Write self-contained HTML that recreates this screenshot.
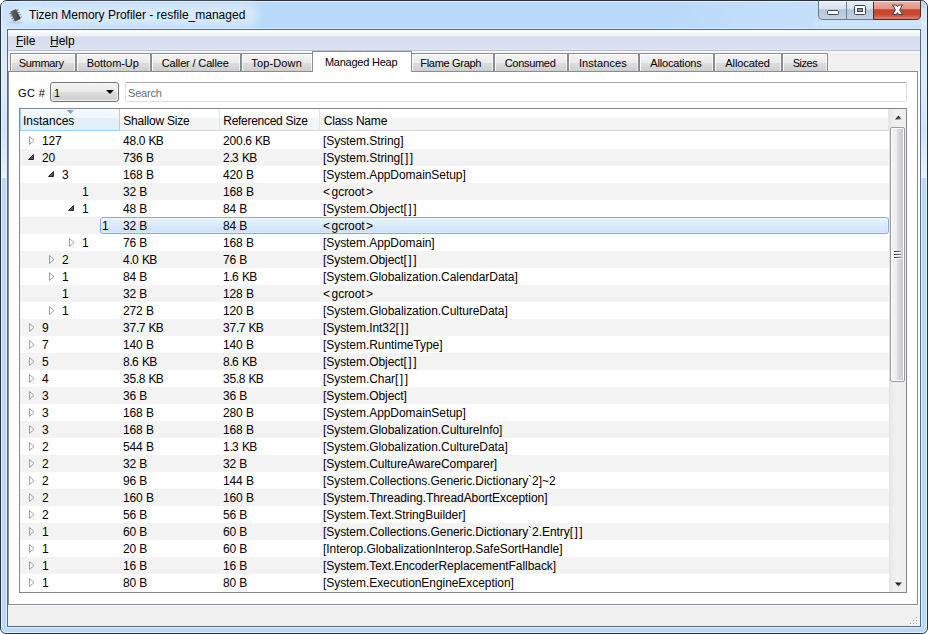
<!DOCTYPE html><html><head><meta charset="utf-8"><style>
*{box-sizing:border-box;margin:0;padding:0}
html,body{width:928px;height:634px;overflow:hidden;background:#fff}
body{position:relative;font-family:"Liberation Sans",sans-serif;font-size:12px;color:#000}
.a{position:absolute}
#win{left:0;top:0;width:928px;height:634px;border:1px solid #25303c;border-radius:7px 7px 6px 6px;background:#b9d9fa;overflow:hidden}
#win .hl{left:0;top:0;right:0;bottom:0;border:1px solid #e6f3fe;border-radius:6px 6px 5px 5px}
#win .hl2{left:5px;top:27px;width:916px;height:600px;border:1px solid #d8ecfd}
#tb{left:2px;top:2px;width:923px;height:26px;background:linear-gradient(90deg,#cfe4fb 0,#bcdafa 30px,#b9d9fa 60px)}
#glow{left:14px;top:4px;width:244px;height:22px;border-radius:11px;background:rgba(240,248,255,.55);filter:blur(5px)}
#title{left:29px;top:8px;font-size:12px;color:#000;white-space:nowrap}
#client{left:7px;top:29px;width:914px;height:598px;border:1px solid #5c6b7a;background:#f0f0f0}
#menu{left:8px;top:30px;width:912px;height:21px;background:linear-gradient(#fefefe 0,#eff1f8 6px,#d6dbee 7px,#dee3f2 20px,#b9c0d6 20px)}
.mi{top:34px;white-space:nowrap}
.ul{height:1px;background:#000;top:46px}
#tabbar{left:8px;top:51px;width:912px;height:2px;background:#f7f7f7}
.tab{top:53px;height:19px;border:1px solid #898c95;border-bottom:none;background:linear-gradient(#fff 0,#fff 1px,#f2f2f2 1px,#ebebeb 9px,#dddddd 9px,#cfcfcf 17px)}
.tab i{position:absolute;left:0;top:0;width:1px;bottom:0;background:#fff;opacity:.8}
.tab b{position:absolute;right:0;top:0;width:1px;bottom:0;background:#fff;opacity:.6}
.tab.sel{top:51px;height:21px;background:#fff;z-index:3}
.tab.sel i,.tab.sel b{display:none}
.tt{top:57px;font-size:11px;white-space:nowrap;z-index:5}
#pane{left:8px;top:71px;width:910px;height:534px;border:1px solid #898c95;background:#fff;z-index:2}
#gclbl{left:18px;top:87px;font-size:11px;letter-spacing:0.4px;z-index:4;white-space:nowrap}
#combo{left:50px;top:82px;width:69px;height:20px;border:1px solid #707070;border-radius:3px;background:linear-gradient(#f2f2f2 0,#ebebeb 9px,#dddddd 9px,#cfcfcf 18px);z-index:4}
#combo .hi{left:0;top:0;right:0;bottom:0;border:1px solid rgba(255,255,255,.7);border-radius:2px}
#combo .v{left:3px;top:4px;font-size:11px}
#search{left:125px;top:82px;width:782px;height:20px;border:1px solid #dbdfe6;border-top-color:#a5a9b0;border-radius:2px;background:#fff;z-index:4}
#search .m{left:2px;top:4px;font-size:11px;color:#6d6d6d;white-space:nowrap;letter-spacing:-0.2px}
#tree{left:19px;top:108px;width:888px;height:485px;border:1px solid #828790;background:#fff;z-index:4;overflow:hidden}
#hdr{left:0;top:0;width:869px;height:22px;background:linear-gradient(#fff 0,#fff 9px,#f3f4f6 9px,#f3f4f6 21px);border-bottom:1px solid #d5d5d5}
.hs{top:0;height:22px;border-right:1px solid #e3e6ea;white-space:nowrap}
.hs .m{position:absolute;top:5px}
.hs.sorted{background:linear-gradient(#f2f9fd 0,#f2f9fd 9px,#e1f0f9 9px,#e1f0f9 21px);border:1px solid #96d9f9;border-top:none}
.row{left:0;width:869px;height:17px}
.row.alt{background:#f3f3f3}
.cell{top:2px;white-space:nowrap;letter-spacing:-0.12px}
.selr{top:0;height:17px;border:1px solid #84acdd;border-radius:3px;background:linear-gradient(#ecf4fe,#c9dffa)}
.selr::after{content:"";position:absolute;left:0;top:0;right:0;bottom:0;border:1px solid rgba(255,255,255,.35);border-radius:2px}
#vsb{left:869px;top:0;width:17px;height:483px;background:linear-gradient(90deg,#e3e3e3 0,#ececec 3px,#f0f0f0 8px,#eeeeee 17px)}
#thumb{left:1px;top:18px;width:15px;height:255px;border:1px solid #9b9b9b;border-radius:2px;background:linear-gradient(90deg,#fff 0,#fff 1px,#f4f4f4 1px,#ededed 6px,#dedee0 6px,#cbcbcf 12px,#fff 12px);box-shadow:inset 0 1px 0 #fff,inset 0 -1px 0 #fff}
.grip{left:3px;width:7px;height:1px;background:linear-gradient(90deg,#2a2a2a,#6a6a6a 70%,#9a9a9a);box-shadow:0 1px 0 rgba(255,255,255,.9)}
#status{left:8px;top:605px;width:912px;height:21px;background:#f0f0f0;border-top:1px solid #fff}
</style></head><body>
<div id="win" class="a"><div class="a hl"></div><div class="a hl2"></div></div>
<div id="tb" class="a"></div>
<div id="glow" class="a"></div>
<div class="a" style="left:2px;top:20px;width:4px;height:158px;background:linear-gradient(#d3e7fb 0,#dcecfc 60px,#cfe4fb 110px,#e4f1fe 155px,#e8f3fe 158px)"></div>
<div class="a" style="left:921px;top:8px;width:5px;height:170px;background:linear-gradient(#d3e7fb 0,#dcecfc 72px,#cfe4fb 122px,#e4f1fe 167px,#e8f3fe 170px)"></div>
<div class="a" style="left:560px;top:2px;width:258px;height:26px;background:linear-gradient(105deg,rgba(255,255,255,0) 40%,rgba(255,255,255,.12) 75%,rgba(255,255,255,.18) 100%)"></div>
<div class="a" style="left:816px;top:19px;width:108px;height:9px;border-radius:4px;background:rgba(255,255,255,.3);filter:blur(2px)"></div>
<svg class="a" style="left:7px;top:7px" width="18" height="18" viewBox="0 0 18 18"><defs><linearGradient id="ic" x1="0" y1="0" x2="1" y2="1"><stop offset="0" stop-color="#6a6a6a"/><stop offset="1" stop-color="#3a3a3a"/></linearGradient></defs><ellipse cx="9" cy="15.6" rx="7.5" ry="0.9" fill="#8a9aaa" opacity=".35"/><g transform="rotate(-25 8.5 8.3)"><rect x="5.3" y="2.8" width="6.5" height="11" rx="0.8" fill="url(#ic)"/><g fill="#7d7d7d"><rect x="3.6" y="4" width="1.7" height="1.1"/><rect x="3.6" y="6.6" width="1.7" height="1.1"/><rect x="3.6" y="9.2" width="1.7" height="1.1"/><rect x="3.6" y="11.8" width="1.7" height="1.1"/><rect x="11.8" y="4" width="1.7" height="1.1"/><rect x="11.8" y="6.6" width="1.7" height="1.1"/><rect x="11.8" y="9.2" width="1.7" height="1.1"/><rect x="11.8" y="11.8" width="1.7" height="1.1"/></g></g></svg>
<div id="title" class="a m">Tizen Memory Profiler - resfile_managed</div>
<svg class="a" style="left:818px;top:0" width="104" height="21" viewBox="0 0 104 21">
<defs>
<linearGradient id="gb" x1="0" y1="0" x2="0" y2="1"><stop offset="0" stop-color="#e9f0f7"/><stop offset=".45" stop-color="#d7e2ee"/><stop offset=".5" stop-color="#b3c6da"/><stop offset="1" stop-color="#c3d3e4"/></linearGradient>
<linearGradient id="gr" x1="0" y1="0" x2="0" y2="1"><stop offset="0" stop-color="#f1b5a8"/><stop offset=".45" stop-color="#e09585"/><stop offset=".5" stop-color="#c8412a"/><stop offset=".75" stop-color="#c54a33"/><stop offset="1" stop-color="#e08b76"/></linearGradient>
</defs>
<path d="M0.5,0 V15 Q0.5,19.5 5,19.5 H28.5 V0 Z" fill="url(#gb)" stroke="#6c7c8c" stroke-width="1"/>
<rect x="28.5" y="0" width="27" height="19.5" fill="url(#gb)" stroke="#6c7c8c" stroke-width="1"/>
<path d="M55.5,0 V19.5 H98 Q102.5,19.5 102.5,15 V0 Z" fill="url(#gr)" stroke="#5a2a22" stroke-width="1"/>
<rect x="9.5" y="10.5" width="11" height="4" rx="1" fill="#fff" stroke="#3a4452"/>
<rect x="36.5" y="5.5" width="11" height="9" rx="1" fill="#fff" stroke="#3a4452"/>
<rect x="39.5" y="8.5" width="5" height="3" fill="#8da0b4" stroke="#3a4452"/>
<path d="M74.5,5 L78.3,5 L79.5,6.8 L80.7,5 L84.5,5 L81.6,9.75 L84.5,14.5 L80.7,14.5 L79.5,12.7 L78.3,14.5 L74.5,14.5 L77.4,9.75 Z" fill="#fff" stroke="#3a3f48" stroke-width="1" stroke-linejoin="round"/>
<rect x="0" y="0" width="104" height="1" fill="#2b3642"/><rect x="1" y="1" width="101" height="1" fill="#fff" opacity=".6"/></svg>
<div id="client" class="a"></div>
<div id="menu" class="a"></div>
<div class="a mi m" style="left:16px">File</div><div class="a ul" style="left:16px;width:7px"></div>
<div class="a mi m" style="left:50px">Help</div><div class="a ul" style="left:50px;width:8px"></div>
<div id="tabbar" class="a"></div>
<div class="a tab" style="left:10px;width:66px"><i></i><b></b></div>
<div class="a m tt" style="left:18.8px;letter-spacing:-0.327px">Summary</div>
<div class="a tab" style="left:76px;width:75px"><i></i><b></b></div>
<div class="a m tt" style="left:86.7px;letter-spacing:-0.047px">Bottom-Up</div>
<div class="a tab" style="left:151px;width:90px"><i></i><b></b></div>
<div class="a m tt" style="left:161.8px;letter-spacing:-0.150px">Caller / Callee</div>
<div class="a tab" style="left:241px;width:72px"><i></i><b></b></div>
<div class="a m tt" style="left:251.3px;letter-spacing:0.138px">Top-Down</div>
<div class="a tab sel" style="left:312px;width:100px"><i></i><b></b></div>
<div class="a m tt" style="top:56px;left:324.9px;letter-spacing:-0.230px">Managed Heap</div>
<div class="a tab" style="left:411px;width:83px"><i></i><b></b></div>
<div class="a m tt" style="left:420.3px;letter-spacing:-0.310px">Flame Graph</div>
<div class="a tab" style="left:494px;width:74px"><i></i><b></b></div>
<div class="a m tt" style="left:504.7px;letter-spacing:-0.300px">Consumed</div>
<div class="a tab" style="left:568px;width:71px"><i></i><b></b></div>
<div class="a m tt" style="left:578.9px;letter-spacing:0.101px">Instances</div>
<div class="a tab" style="left:639px;width:75px"><i></i><b></b></div>
<div class="a m tt" style="left:650.3px;letter-spacing:-0.170px">Allocations</div>
<div class="a tab" style="left:714px;width:68px"><i></i><b></b></div>
<div class="a m tt" style="left:725.3px;letter-spacing:-0.096px">Allocated</div>
<div class="a tab" style="left:782px;width:46px"><i></i><b></b></div>
<div class="a m tt" style="left:792.7px;letter-spacing:-0.452px">Sizes</div>
<div id="pane" class="a"></div>
<div class="a" style="left:918px;top:71px;width:2px;height:534px;background:#fff"></div>
<div id="gclbl" class="a m">GC #</div>
<div id="combo" class="a"><div class="a hi"></div><span class="a v m">1</span><svg class="a" style="left:55px;top:7px" width="9" height="5"><path d="M0,0 H8 L4,4Z" fill="#000"/></svg></div>
<div id="search" class="a"><span class="a m">Search</span></div>
<div id="tree" class="a">
<div id="hdr" class="a"></div>
<div class="a hs sorted" style="left:0;width:100px"><span class="m" style="left:2px">Instances</span></div>
<svg class="a" style="left:47px;top:1px" width="8" height="5"><defs><linearGradient id="sa" x1="0" y1="0" x2="1" y2="0"><stop offset="0" stop-color="#3b7cae"/><stop offset="1" stop-color="#b9dcf3"/></linearGradient></defs><path d="M0,0 H7.5 L3.75,4Z" fill="url(#sa)"/></svg>
<div class="a hs" style="left:100px;width:100px"><span class="m" style="left:3.3px;letter-spacing:-0.2px">Shallow Size</span></div>
<div class="a hs" style="left:200px;width:100px"><span class="m" style="left:3.3px;letter-spacing:-0.29px">Referenced Size</span></div>
<div class="a hs" style="left:300px;width:569px"><span class="m" style="left:3.7px;letter-spacing:-0.19px">Class Name</span></div>
<div class="a row" style="top:23px">
<svg class="a" style="left:9px;top:4px" width="7" height="10"><path d="M0.5,0.5 L5,4.5 L0.5,8.5Z" fill="none" stroke="#a0a0a0" stroke-width="1"/></svg>
<div class="a cell m" style="left:22px">127</div>
<div class="a cell m" style="left:103px">48<span style="letter-spacing:-0.8px">.</span>0 <span style="letter-spacing:-0.6px">K</span>B</div>
<div class="a cell m" style="left:203px">200<span style="letter-spacing:-0.8px">.</span>6 <span style="letter-spacing:-0.6px">K</span>B</div>
<div class="a cell m" style="left:303px;letter-spacing:-0.06px">[System.String]</div>
</div>
<div class="a row alt" style="top:40px">
<svg class="a" style="left:8px;top:5px" width="7" height="7"><path d="M0.5,5.5 L5.5,5.5 L5.5,0.5Z" fill="#5a5a5a" stroke="#262626" stroke-width="1" stroke-linejoin="round"/></svg>
<div class="a cell m" style="left:22px">20</div>
<div class="a cell m" style="left:103px">736 B</div>
<div class="a cell m" style="left:203px">2<span style="letter-spacing:-0.8px">.</span>3 <span style="letter-spacing:-0.6px">K</span>B</div>
<div class="a cell m" style="left:303px;letter-spacing:-0.06px">[System.String<span style="letter-spacing:1.5px">[]</span>]</div>
</div>
<div class="a row" style="top:57px">
<svg class="a" style="left:28px;top:5px" width="7" height="7"><path d="M0.5,5.5 L5.5,5.5 L5.5,0.5Z" fill="#5a5a5a" stroke="#262626" stroke-width="1" stroke-linejoin="round"/></svg>
<div class="a cell m" style="left:42px">3</div>
<div class="a cell m" style="left:103px">168 B</div>
<div class="a cell m" style="left:203px">420 B</div>
<div class="a cell m" style="left:303px;letter-spacing:-0.06px">[System.AppDomainSetup]</div>
</div>
<div class="a row alt" style="top:74px">
<div class="a cell m" style="left:62px">1</div>
<div class="a cell m" style="left:103px">32 B</div>
<div class="a cell m" style="left:203px">168 B</div>
<div class="a cell m" style="left:303px;letter-spacing:-0.06px"><span style="letter-spacing:1.6px">&lt;</span>gcroo<span style="letter-spacing:1.2px">t</span>&gt;</div>
</div>
<div class="a row" style="top:91px">
<svg class="a" style="left:48px;top:5px" width="7" height="7"><path d="M0.5,5.5 L5.5,5.5 L5.5,0.5Z" fill="#5a5a5a" stroke="#262626" stroke-width="1" stroke-linejoin="round"/></svg>
<div class="a cell m" style="left:62px">1</div>
<div class="a cell m" style="left:103px">48 B</div>
<div class="a cell m" style="left:203px">84 B</div>
<div class="a cell m" style="left:303px;letter-spacing:-0.06px">[System.Object<span style="letter-spacing:1.5px">[]</span>]</div>
</div>
<div class="a row alt" style="top:108px">
<div class="a selr" style="left:80px;width:789px"></div>
<div class="a cell m" style="left:82px">1</div>
<div class="a cell m" style="left:103px">32 B</div>
<div class="a cell m" style="left:203px">84 B</div>
<div class="a cell m" style="left:303px;letter-spacing:-0.06px"><span style="letter-spacing:1.6px">&lt;</span>gcroo<span style="letter-spacing:1.2px">t</span>&gt;</div>
</div>
<div class="a row" style="top:125px">
<svg class="a" style="left:49px;top:4px" width="7" height="10"><path d="M0.5,0.5 L5,4.5 L0.5,8.5Z" fill="none" stroke="#a0a0a0" stroke-width="1"/></svg>
<div class="a cell m" style="left:62px">1</div>
<div class="a cell m" style="left:103px">76 B</div>
<div class="a cell m" style="left:203px">168 B</div>
<div class="a cell m" style="left:303px;letter-spacing:-0.06px">[System.AppDomain]</div>
</div>
<div class="a row alt" style="top:142px">
<svg class="a" style="left:29px;top:4px" width="7" height="10"><path d="M0.5,0.5 L5,4.5 L0.5,8.5Z" fill="none" stroke="#a0a0a0" stroke-width="1"/></svg>
<div class="a cell m" style="left:42px">2</div>
<div class="a cell m" style="left:103px">4<span style="letter-spacing:-0.8px">.</span>0 <span style="letter-spacing:-0.6px">K</span>B</div>
<div class="a cell m" style="left:203px">76 B</div>
<div class="a cell m" style="left:303px;letter-spacing:-0.06px">[System.Object<span style="letter-spacing:1.5px">[]</span>]</div>
</div>
<div class="a row" style="top:159px">
<svg class="a" style="left:29px;top:4px" width="7" height="10"><path d="M0.5,0.5 L5,4.5 L0.5,8.5Z" fill="none" stroke="#a0a0a0" stroke-width="1"/></svg>
<div class="a cell m" style="left:42px">1</div>
<div class="a cell m" style="left:103px">84 B</div>
<div class="a cell m" style="left:203px">1<span style="letter-spacing:-0.8px">.</span>6 <span style="letter-spacing:-0.6px">K</span>B</div>
<div class="a cell m" style="left:303px;letter-spacing:-0.06px">[System.Globalization.CalendarData]</div>
</div>
<div class="a row alt" style="top:176px">
<div class="a cell m" style="left:42px">1</div>
<div class="a cell m" style="left:103px">32 B</div>
<div class="a cell m" style="left:203px">128 B</div>
<div class="a cell m" style="left:303px;letter-spacing:-0.06px"><span style="letter-spacing:1.6px">&lt;</span>gcroo<span style="letter-spacing:1.2px">t</span>&gt;</div>
</div>
<div class="a row" style="top:193px">
<svg class="a" style="left:29px;top:4px" width="7" height="10"><path d="M0.5,0.5 L5,4.5 L0.5,8.5Z" fill="none" stroke="#a0a0a0" stroke-width="1"/></svg>
<div class="a cell m" style="left:42px">1</div>
<div class="a cell m" style="left:103px">272 B</div>
<div class="a cell m" style="left:203px">120 B</div>
<div class="a cell m" style="left:303px;letter-spacing:-0.06px">[System.Globalization.CultureData]</div>
</div>
<div class="a row alt" style="top:210px">
<svg class="a" style="left:9px;top:4px" width="7" height="10"><path d="M0.5,0.5 L5,4.5 L0.5,8.5Z" fill="none" stroke="#a0a0a0" stroke-width="1"/></svg>
<div class="a cell m" style="left:22px">9</div>
<div class="a cell m" style="left:103px">37<span style="letter-spacing:-0.8px">.</span>7 <span style="letter-spacing:-0.6px">K</span>B</div>
<div class="a cell m" style="left:203px">37<span style="letter-spacing:-0.8px">.</span>7 <span style="letter-spacing:-0.6px">K</span>B</div>
<div class="a cell m" style="left:303px;letter-spacing:-0.06px">[System.Int32<span style="letter-spacing:1.5px">[]</span>]</div>
</div>
<div class="a row" style="top:227px">
<svg class="a" style="left:9px;top:4px" width="7" height="10"><path d="M0.5,0.5 L5,4.5 L0.5,8.5Z" fill="none" stroke="#a0a0a0" stroke-width="1"/></svg>
<div class="a cell m" style="left:22px">7</div>
<div class="a cell m" style="left:103px">140 B</div>
<div class="a cell m" style="left:203px">140 B</div>
<div class="a cell m" style="left:303px;letter-spacing:-0.06px">[System.RuntimeType]</div>
</div>
<div class="a row alt" style="top:244px">
<svg class="a" style="left:9px;top:4px" width="7" height="10"><path d="M0.5,0.5 L5,4.5 L0.5,8.5Z" fill="none" stroke="#a0a0a0" stroke-width="1"/></svg>
<div class="a cell m" style="left:22px">5</div>
<div class="a cell m" style="left:103px">8<span style="letter-spacing:-0.8px">.</span>6 <span style="letter-spacing:-0.6px">K</span>B</div>
<div class="a cell m" style="left:203px">8<span style="letter-spacing:-0.8px">.</span>6 <span style="letter-spacing:-0.6px">K</span>B</div>
<div class="a cell m" style="left:303px;letter-spacing:-0.06px">[System.Object<span style="letter-spacing:1.5px">[]</span>]</div>
</div>
<div class="a row" style="top:261px">
<svg class="a" style="left:9px;top:4px" width="7" height="10"><path d="M0.5,0.5 L5,4.5 L0.5,8.5Z" fill="none" stroke="#a0a0a0" stroke-width="1"/></svg>
<div class="a cell m" style="left:22px">4</div>
<div class="a cell m" style="left:103px">35<span style="letter-spacing:-0.8px">.</span>8 <span style="letter-spacing:-0.6px">K</span>B</div>
<div class="a cell m" style="left:203px">35<span style="letter-spacing:-0.8px">.</span>8 <span style="letter-spacing:-0.6px">K</span>B</div>
<div class="a cell m" style="left:303px;letter-spacing:-0.06px">[System.Char<span style="letter-spacing:1.5px">[]</span>]</div>
</div>
<div class="a row alt" style="top:278px">
<svg class="a" style="left:9px;top:4px" width="7" height="10"><path d="M0.5,0.5 L5,4.5 L0.5,8.5Z" fill="none" stroke="#a0a0a0" stroke-width="1"/></svg>
<div class="a cell m" style="left:22px">3</div>
<div class="a cell m" style="left:103px">36 B</div>
<div class="a cell m" style="left:203px">36 B</div>
<div class="a cell m" style="left:303px;letter-spacing:-0.06px">[System.Object]</div>
</div>
<div class="a row" style="top:295px">
<svg class="a" style="left:9px;top:4px" width="7" height="10"><path d="M0.5,0.5 L5,4.5 L0.5,8.5Z" fill="none" stroke="#a0a0a0" stroke-width="1"/></svg>
<div class="a cell m" style="left:22px">3</div>
<div class="a cell m" style="left:103px">168 B</div>
<div class="a cell m" style="left:203px">280 B</div>
<div class="a cell m" style="left:303px;letter-spacing:-0.06px">[System.AppDomainSetup]</div>
</div>
<div class="a row alt" style="top:312px">
<svg class="a" style="left:9px;top:4px" width="7" height="10"><path d="M0.5,0.5 L5,4.5 L0.5,8.5Z" fill="none" stroke="#a0a0a0" stroke-width="1"/></svg>
<div class="a cell m" style="left:22px">3</div>
<div class="a cell m" style="left:103px">168 B</div>
<div class="a cell m" style="left:203px">168 B</div>
<div class="a cell m" style="left:303px;letter-spacing:-0.06px">[System.Globalization.CultureInfo]</div>
</div>
<div class="a row" style="top:329px">
<svg class="a" style="left:9px;top:4px" width="7" height="10"><path d="M0.5,0.5 L5,4.5 L0.5,8.5Z" fill="none" stroke="#a0a0a0" stroke-width="1"/></svg>
<div class="a cell m" style="left:22px">2</div>
<div class="a cell m" style="left:103px">544 B</div>
<div class="a cell m" style="left:203px">1<span style="letter-spacing:-0.8px">.</span>3 <span style="letter-spacing:-0.6px">K</span>B</div>
<div class="a cell m" style="left:303px;letter-spacing:-0.06px">[System.Globalization.CultureData]</div>
</div>
<div class="a row alt" style="top:346px">
<svg class="a" style="left:9px;top:4px" width="7" height="10"><path d="M0.5,0.5 L5,4.5 L0.5,8.5Z" fill="none" stroke="#a0a0a0" stroke-width="1"/></svg>
<div class="a cell m" style="left:22px">2</div>
<div class="a cell m" style="left:103px">32 B</div>
<div class="a cell m" style="left:203px">32 B</div>
<div class="a cell m" style="left:303px;letter-spacing:-0.06px">[System.CultureAwareComparer]</div>
</div>
<div class="a row" style="top:363px">
<svg class="a" style="left:9px;top:4px" width="7" height="10"><path d="M0.5,0.5 L5,4.5 L0.5,8.5Z" fill="none" stroke="#a0a0a0" stroke-width="1"/></svg>
<div class="a cell m" style="left:22px">2</div>
<div class="a cell m" style="left:103px">96 B</div>
<div class="a cell m" style="left:203px">144 B</div>
<div class="a cell m" style="left:303px;letter-spacing:-0.06px">[System.Collections.Generic.Dictionary`2]~2</div>
</div>
<div class="a row alt" style="top:380px">
<svg class="a" style="left:9px;top:4px" width="7" height="10"><path d="M0.5,0.5 L5,4.5 L0.5,8.5Z" fill="none" stroke="#a0a0a0" stroke-width="1"/></svg>
<div class="a cell m" style="left:22px">2</div>
<div class="a cell m" style="left:103px">160 B</div>
<div class="a cell m" style="left:203px">160 B</div>
<div class="a cell m" style="left:303px;letter-spacing:-0.06px">[System.Threading.ThreadAbortException]</div>
</div>
<div class="a row" style="top:397px">
<svg class="a" style="left:9px;top:4px" width="7" height="10"><path d="M0.5,0.5 L5,4.5 L0.5,8.5Z" fill="none" stroke="#a0a0a0" stroke-width="1"/></svg>
<div class="a cell m" style="left:22px">2</div>
<div class="a cell m" style="left:103px">56 B</div>
<div class="a cell m" style="left:203px">56 B</div>
<div class="a cell m" style="left:303px;letter-spacing:-0.06px">[System.Text.StringBuilder]</div>
</div>
<div class="a row alt" style="top:414px">
<svg class="a" style="left:9px;top:4px" width="7" height="10"><path d="M0.5,0.5 L5,4.5 L0.5,8.5Z" fill="none" stroke="#a0a0a0" stroke-width="1"/></svg>
<div class="a cell m" style="left:22px">1</div>
<div class="a cell m" style="left:103px">60 B</div>
<div class="a cell m" style="left:203px">60 B</div>
<div class="a cell m" style="left:303px;letter-spacing:-0.06px">[System.Collections.Generic.Dictionary`2.Entry<span style="letter-spacing:1.5px">[]</span>]</div>
</div>
<div class="a row" style="top:431px">
<svg class="a" style="left:9px;top:4px" width="7" height="10"><path d="M0.5,0.5 L5,4.5 L0.5,8.5Z" fill="none" stroke="#a0a0a0" stroke-width="1"/></svg>
<div class="a cell m" style="left:22px">1</div>
<div class="a cell m" style="left:103px">20 B</div>
<div class="a cell m" style="left:203px">60 B</div>
<div class="a cell m" style="left:303px;letter-spacing:-0.06px">[Interop.GlobalizationInterop.SafeSortHandle]</div>
</div>
<div class="a row alt" style="top:448px">
<svg class="a" style="left:9px;top:4px" width="7" height="10"><path d="M0.5,0.5 L5,4.5 L0.5,8.5Z" fill="none" stroke="#a0a0a0" stroke-width="1"/></svg>
<div class="a cell m" style="left:22px">1</div>
<div class="a cell m" style="left:103px">16 B</div>
<div class="a cell m" style="left:203px">16 B</div>
<div class="a cell m" style="left:303px;letter-spacing:-0.06px">[System.Text.EncoderReplacementFallback]</div>
</div>
<div class="a row" style="top:465px">
<svg class="a" style="left:9px;top:4px" width="7" height="10"><path d="M0.5,0.5 L5,4.5 L0.5,8.5Z" fill="none" stroke="#a0a0a0" stroke-width="1"/></svg>
<div class="a cell m" style="left:22px">1</div>
<div class="a cell m" style="left:103px">80 B</div>
<div class="a cell m" style="left:203px">80 B</div>
<div class="a cell m" style="left:303px;letter-spacing:-0.06px">[System.ExecutionEngineException]</div>
</div>
<div id="vsb" class="a">
<svg class="a" style="left:6px;top:6px" width="8" height="5"><defs><linearGradient id="au" x1="0" y1="0" x2="1" y2="1"><stop offset="0" stop-color="#000"/><stop offset=".5" stop-color="#333"/><stop offset="1" stop-color="#b0b0b0"/></linearGradient></defs><path d="M0,4.5 L3.5,0.5 L7,4.5Z" fill="url(#au)"/></svg>
<div id="thumb" class="a"><div class="a grip" style="top:123px"></div><div class="a grip" style="top:126px"></div><div class="a grip" style="top:129px"></div></div>
<svg class="a" style="left:6px;top:473px" width="8" height="5"><defs><linearGradient id="ad" x1="0" y1="0" x2="1" y2="1"><stop offset="0" stop-color="#000"/><stop offset=".45" stop-color="#2a2a2a"/><stop offset="1" stop-color="#b8b8b8"/></linearGradient></defs><path d="M0,0.5 L7,0.5 L3.5,4.5Z" fill="url(#ad)"/></svg>
</div>
</div>
<div id="status" class="a"></div>
<div class="a" style="left:916px;top:617px;width:1px;height:1px;background:#9a9a9a;box-shadow:1px 1px 0 #fff"></div>
<div class="a" style="left:913px;top:620px;width:1px;height:1px;background:#9a9a9a;box-shadow:1px 1px 0 #fff"></div>
<div class="a" style="left:916px;top:620px;width:1px;height:1px;background:#9a9a9a;box-shadow:1px 1px 0 #fff"></div>
<div class="a" style="left:910px;top:623px;width:1px;height:1px;background:#9a9a9a;box-shadow:1px 1px 0 #fff"></div>
<div class="a" style="left:913px;top:623px;width:1px;height:1px;background:#9a9a9a;box-shadow:1px 1px 0 #fff"></div>
<div class="a" style="left:916px;top:623px;width:1px;height:1px;background:#9a9a9a;box-shadow:1px 1px 0 #fff"></div>
</body></html>
